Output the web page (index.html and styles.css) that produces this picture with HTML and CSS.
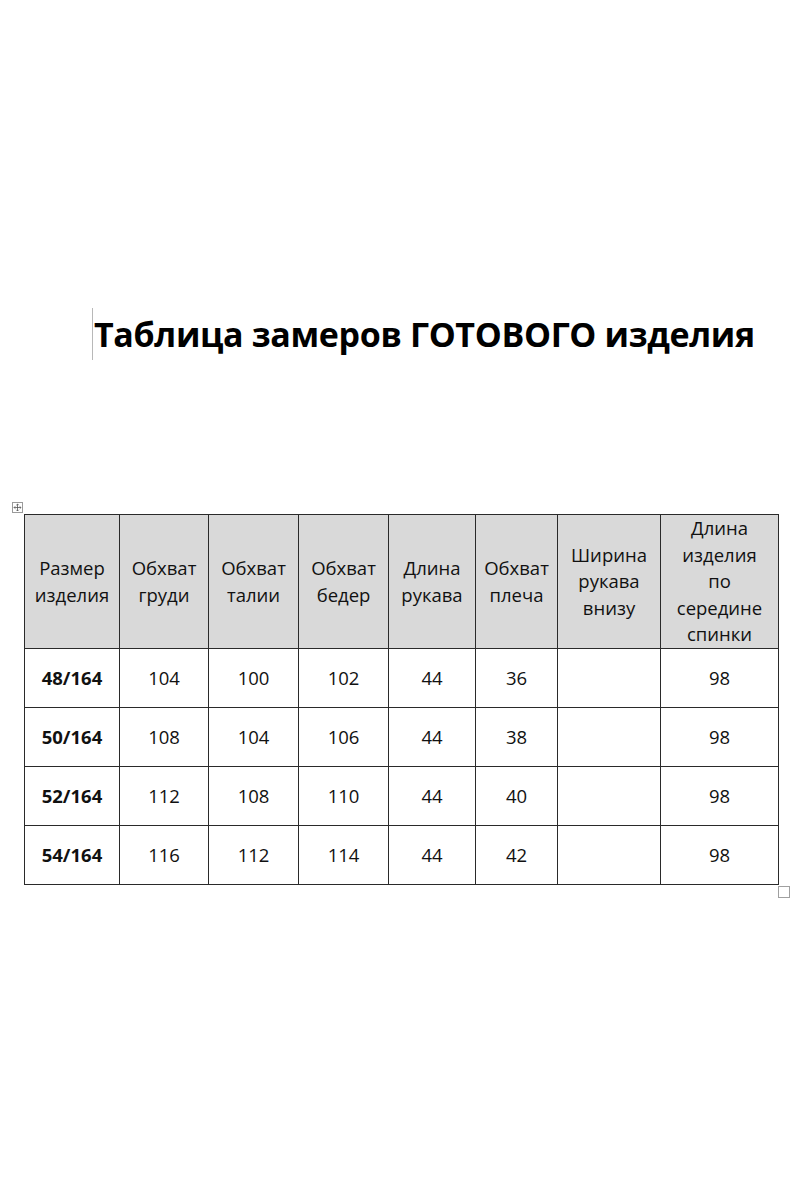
FILE: index.html
```html
<!DOCTYPE html>
<html lang="ru">
<head>
<meta charset="utf-8">
<link rel="stylesheet" href="styles.css">
</head>
<body>
<div class="page">
  <div class="title-row">
    <span class="cursor"></span>
    <h1 class="title">Таблица замеров ГОТОВОГО изделия</h1>
  </div>
  <div class="table-wrap">
    <span class="move-handle">
      <svg width="11" height="11" viewBox="0 0 11 11">
        <rect x="0.5" y="0.5" width="10" height="10" fill="#fff" stroke="#9a9a9a"/>
        <path d="M5.5 2v7M2 5.5h7M5.5 2l-1.2 1.2M5.5 2l1.2 1.2M5.5 9l-1.2-1.2M5.5 9l1.2-1.2M2 5.5l1.2-1.2M2 5.5l1.2 1.2M9 5.5l-1.2-1.2M9 5.5l-1.2 1.2" stroke="#555" stroke-width="0.8" fill="none"/>
      </svg>
    </span>
    <table class="sizes">
      <colgroup>
        <col class="c1"><col class="c2"><col class="c3"><col class="c4">
        <col class="c5"><col class="c6"><col class="c7"><col class="c8">
      </colgroup>
      <thead>
        <tr>
          <th>Размер<br>изделия</th>
          <th>Обхват<br>груди</th>
          <th>Обхват<br>талии</th>
          <th>Обхват<br>бедер</th>
          <th>Длина<br>рукава</th>
          <th>Обхват<br>плеча</th>
          <th>Ширина<br>рукава<br>внизу</th>
          <th>Длина<br>изделия<br>по<br>середине<br>спинки</th>
        </tr>
      </thead>
      <tbody>
        <tr><td class="size">48/164</td><td>104</td><td>100</td><td>102</td><td>44</td><td>36</td><td></td><td>98</td></tr>
        <tr><td class="size">50/164</td><td>108</td><td>104</td><td>106</td><td>44</td><td>38</td><td></td><td>98</td></tr>
        <tr><td class="size">52/164</td><td>112</td><td>108</td><td>110</td><td>44</td><td>40</td><td></td><td>98</td></tr>
        <tr><td class="size">54/164</td><td>116</td><td>112</td><td>114</td><td>44</td><td>42</td><td></td><td>98</td></tr>
      </tbody>
    </table>
    <span class="resize-handle"></span>
  </div>
</div>
</body>
</html>
```

FILE: styles.css
```css
html, body {
  margin: 0;
  padding: 0;
  background: #ffffff;
}

.page {
  width: 800px;
  height: 1200px;
  font-family: "Open Sans", "Liberation Sans", sans-serif;
  color: #111;
}

.title-row {
  display: flex;
  align-items: center;
  padding-top: 308px;
  padding-left: 92px;
  height: 52px;
}

.cursor {
  display: block;
  width: 1px;
  height: 52px;
  background: #b8b8b8;
}

.title {
  margin: 0 0 0 1px;
  font-size: 34px;
  font-weight: 700;
  letter-spacing: -0.35px;
  line-height: 52px;
  color: #000;
  white-space: nowrap;
}

.table-wrap {
  position: relative;
  margin-top: 154px;
  margin-left: 24px;
  width: 754px;
}

.move-handle {
  position: absolute;
  left: -12px;
  top: -12px;
  width: 11px;
  height: 11px;
  line-height: 0;
}

.resize-handle {
  position: absolute;
  right: -12px;
  bottom: -13px;
  width: 12px;
  height: 12px;
  border: 1px solid #a0a0a0;
  box-sizing: border-box;
  background: #fff;
}

.sizes {
  border-collapse: collapse;
  table-layout: fixed;
  width: 754px;
}

.c1 { width: 95px; }
.c2 { width: 89px; }
.c3 { width: 90px; }
.c4 { width: 90px; }
.c5 { width: 87px; }
.c6 { width: 82px; }
.c7 { width: 103px; }
.c8 { width: 118px; }

.sizes th,
.sizes td {
  border: 1.5px solid #2a2a2a;
  text-align: center;
  vertical-align: middle;
  padding: 0;
  font-size: 18.5px;
  color: #111;
}

.sizes th {
  background: #d9d9d9;
  font-weight: 400;
  line-height: 26.5px;
  height: 133px;
}

.sizes td {
  height: 58px;
  line-height: 20px;
}

.sizes td.size {
  font-weight: 700;
}
```
